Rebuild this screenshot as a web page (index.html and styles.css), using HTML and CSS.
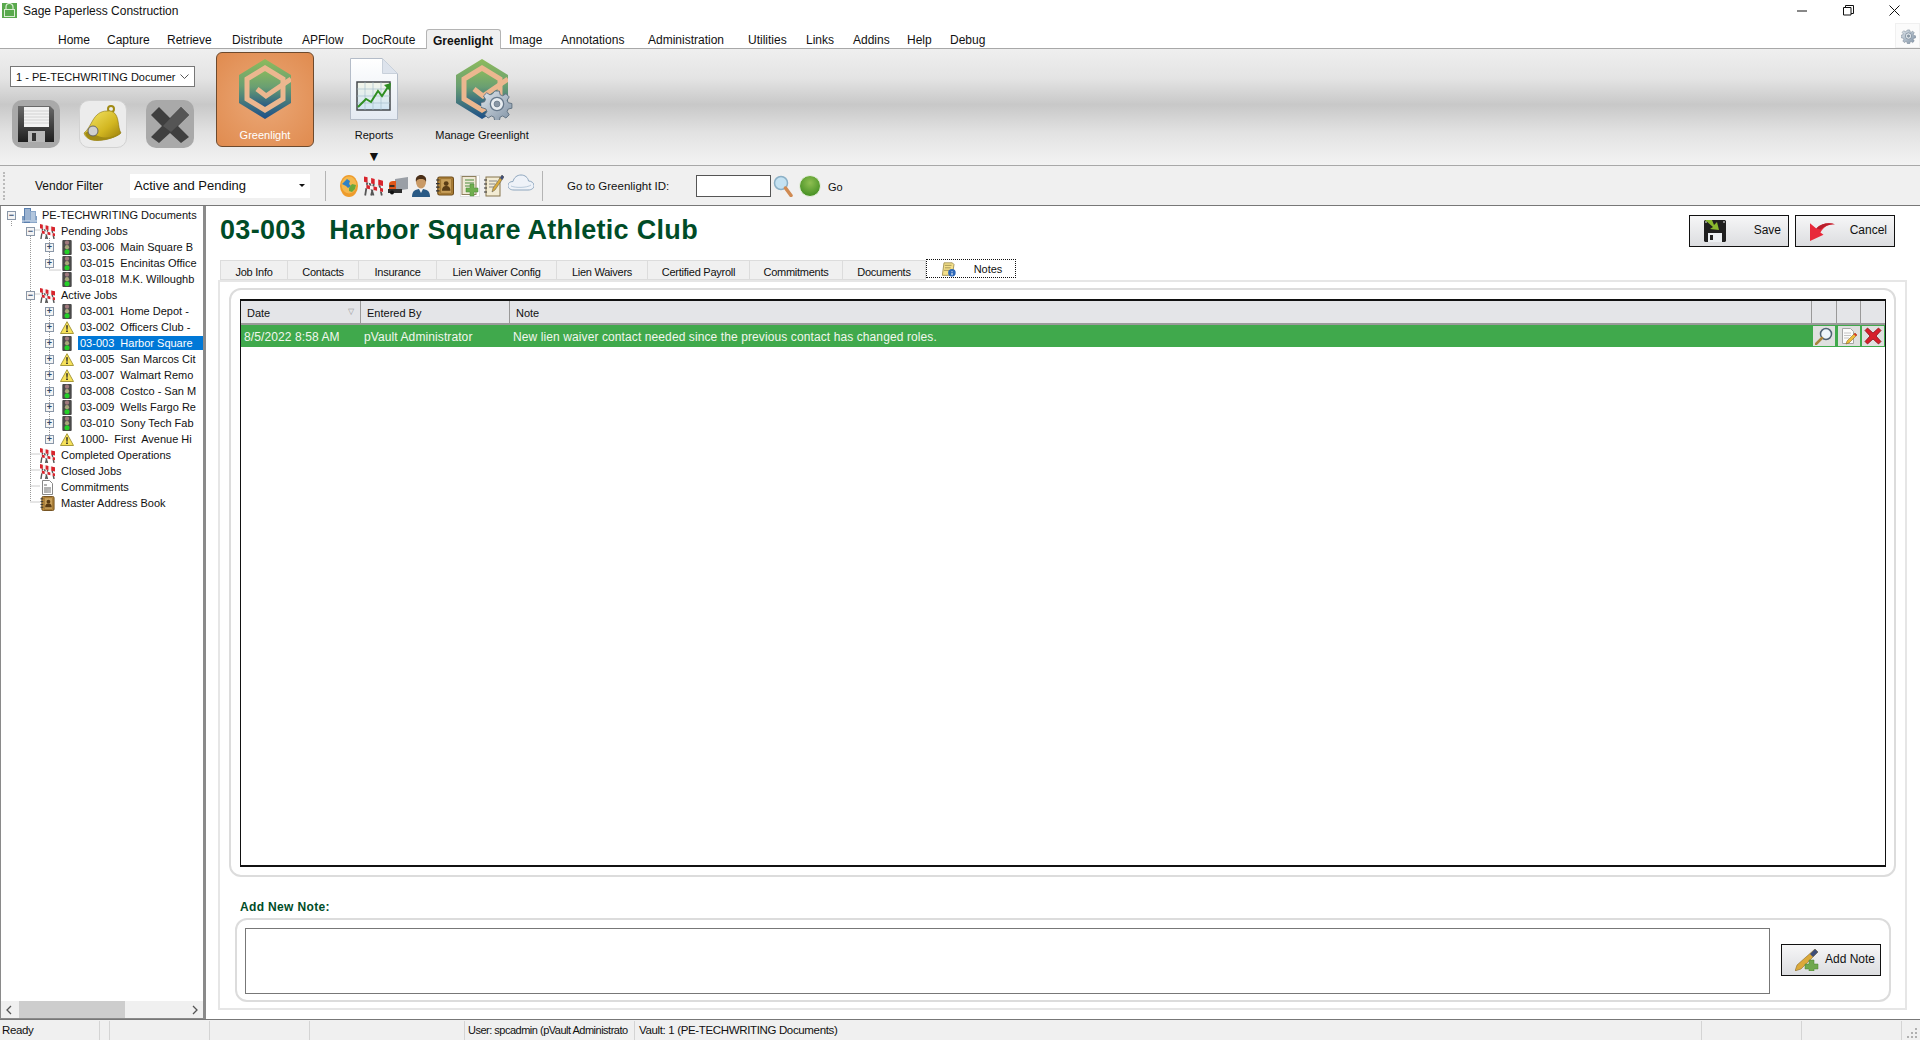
FILE: index.html
```html
<!DOCTYPE html>
<html>
<head>
    <title>Sage Paperless Construction</title>
    <link rel="stylesheet" href="styles.css">
</head>
<body>
    <svg class="defs" width="0" height="0">
        <defs>
            <linearGradient id="hexGrad" x1="0" y1="0" x2="0" y2="1">
                <stop offset="0" stop-color="#8dbb5c"/>
                <stop offset="0.45" stop-color="#6a9f72"/>
                <stop offset="1" stop-color="#1d4f88"/>
            </linearGradient>
            <linearGradient id="bellGrad" x1="0" y1="0" x2="1" y2="1">
                <stop offset="0" stop-color="#f7e96e"/>
                <stop offset="0.6" stop-color="#d2b620"/>
                <stop offset="1" stop-color="#94790c"/>
            </linearGradient>
            <linearGradient id="pageGrad" x1="0" y1="0" x2="0" y2="1">
                <stop offset="0" stop-color="#ffffff"/>
                <stop offset="1" stop-color="#e4eaf2"/>
            </linearGradient>
            <linearGradient id="chartGrad" x1="0" y1="0" x2="0" y2="1">
                <stop offset="0" stop-color="#f4f6ea"/>
                <stop offset="1" stop-color="#cfe4f4"/>
            </linearGradient>
            <linearGradient id="diskGrad" x1="0" y1="0" x2="0" y2="1">
                <stop offset="0" stop-color="#6a6a6a"/>
                <stop offset="1" stop-color="#1e1e1e"/>
            </linearGradient>
            <linearGradient id="gearGrad" x1="0" y1="0" x2="1" y2="1">
                <stop offset="0" stop-color="#dfe6ec"/>
                <stop offset="1" stop-color="#7f91a4"/>
            </linearGradient>
            <radialGradient id="ballGrad" cx="0.5" cy="0.35" r="0.7">
                <stop offset="0" stop-color="#8fbf52"/>
                <stop offset="1" stop-color="#3d8a1e"/>
            </radialGradient>
            <symbol id="logo" viewBox="0 0 52 60">
                <polygon points="26,0 52,16 52,44 26,60 0,44 0,16" fill="url(#hexGrad)"/>
                <polygon points="26,9 44,20 44,40 26,51 8,40 8,20" fill="url(#hexGrad)" stroke="#ecb78f" stroke-width="5"/>
                <path d="M18 30l9 7 25-17" fill="none" stroke="#ecb78f" stroke-width="5"/>
            </symbol>
            <symbol id="gear" viewBox="0 0 24 24">
                <path d="M10 1h4l.7 3.2 2.2.9 2.8-1.800 2.800 2.800-1.800 2.800.9 2.200 3.200.7v4l-3.200.7-.9 2.200 1.800 2.800-2.800 2.800-2.800-1.800-2.200.9-.7 3.200h-4l-.7-3.200-2.200-.9-2.800 1.800-2.800-2.800 1.800-2.800-.9-2.200L-2 15v-4l3.200-.7.9-2.200L.3 5.300l2.800-2.800 2.800 1.800 2.200-.9z" transform="translate(1.600 1.400) scale(.87)" fill="url(#gearGrad)" stroke="#5f7080" stroke-width=".8"/>
                <circle cx="12" cy="12" r="5" fill="#e8edf1" stroke="#66788a"/>
                <circle cx="12" cy="12" r="2.200" fill="#8a98a6" stroke="#5f7080" stroke-width=".5"/>
            </symbol>
            <symbol id="barricade" viewBox="0 0 16 16">
                <path d="M3 3l-2 13M12 3l3 13M4 3l4 13M9 3l-3 13" stroke="#555" stroke-width="1.500"/>
                <path d="M0 0l16 3.500v4.500L0 4.500z" fill="#f4f4f4"/>
                <path d="M0 0l3 .7v4.500L0 4.500zM6 1.300l3 .7v4.500L6 5.800zM12 2.600l4 .9v4.500l-4-.9z" fill="#d8242c"/>
                <path d="M0 6.500l16 3.500v3L0 9.500z" fill="#f4f4f4"/>
                <path d="M2 7l3 .7v3L2 10zM8 8.300l3 .7v3l-3-.7zM13.500 9.500l2.500.5v3l-2.500-.5z" fill="#d8242c"/>
            </symbol>
            <symbol id="signal" viewBox="0 0 10 16">
                <rect width="10" height="16" rx="1" fill="#4a4a4a"/>
                <circle cx="5" cy="2.800" r="2.300" fill="#a07a7e"/>
                <circle cx="5" cy="7.600" r="2.300" fill="#a8a67a"/>
                <circle cx="5" cy="12.600" r="2.700" fill="#25d028"/>
            </symbol>
            <symbol id="warn" viewBox="0 0 14 13">
                <path d="M7 .7L13.500 12.500H.5z" fill="#f7e25a" stroke="#a89a3c"/>
                <path d="M6.200 4.200h1.600l-.3 4.600h-1zM6.200 9.600h1.600v1.500H6.200z" fill="#222"/>
            </symbol>
            <symbol id="building" viewBox="0 0 15 15">
                <rect x="0" y="8" width="15" height="7" fill="#7f9cc0"/>
                <rect x="2" y="0" width="7" height="15" fill="#5a7fae"/>
                <rect x="8" y="3" width="6" height="12" fill="#8aa6c8"/>
                <path d="M3 2h5M3 4h5M3 6h5M3 8h5M3 10h5M3 12h5M9 5h4M9 7h4M9 9h4M9 11h4M0 13h15" stroke="#dbe6f2"/>
            </symbol>
            <symbol id="po" viewBox="0 0 15 15">
                <path d="M2.500.5h7l3 3v11h-10z" fill="#fff" stroke="#888"/>
                <path d="M4 5h3M4 8h7M4 10h7M4 12h7" stroke="#666"/>
                <rect x="7.500" y="9" width="3.500" height="4" fill="#bbb"/>
            </symbol>
            <symbol id="book" viewBox="0 0 15 16">
                <rect x="1.500" y=".5" width="13" height="15" rx="1.500" fill="#b88a3c" stroke="#6d4a18"/>
                <rect x="4" y="2" width="9" height="12" fill="#c9a05a" stroke="#8a6428" stroke-width=".5"/>
                <circle cx="8.500" cy="6" r="2" fill="#5a3c14"/>
                <path d="M5 12c0-3 1.500-4 3.500-4s3.500 1 3.500 4z" fill="#5a3c14"/>
                <path d="M0 3h3M0 6h3M0 9h3M0 12h3" stroke="#333"/>
            </symbol>
            <symbol id="globe" viewBox="0 0 18 22">
                <ellipse cx="9" cy="11" rx="9" ry="11" fill="#ee9c2c"/>
                <ellipse cx="9" cy="10" rx="7.500" ry="8.500" fill="#f4b84e"/>
                <path d="M2 9l5-5 3 2-1 3 2 2-3 2-2-2z" fill="#2f82c6"/>
                <path d="M9 13l3-4 4 1-1 4-3 3-3-1z" fill="#6aa83c"/>
            </symbol>
            <symbol id="truck" viewBox="0 0 20 18">
                <path d="M7 2l13-2v12L7 14z" fill="#9a9fa6"/>
                <path d="M1 7c0-2 2-3 4-3h3v10H1z" fill="#e0561a"/>
                <path d="M1.500 8h5v2h-5z" fill="#3a2a20"/>
                <rect x="0" y="12" width="14" height="4" fill="#2e2e2e"/>
                <circle cx="4" cy="15.500" r="2" fill="#111"/>
            </symbol>
            <symbol id="person" viewBox="0 0 18 22">
                <path d="M0 22c0-6 3-8 9-8s9 2 9 8z" fill="#2a5a85"/>
                <path d="M7 14l2 4 2-4z" fill="#f2f2f2"/>
                <ellipse cx="9" cy="7" rx="5" ry="6.500" fill="#c99a66"/>
                <path d="M4 7C3 2 6 0 9 0s6 2 5 7c-1-3-3-3-5-3s-4 0-5 3z" fill="#4a2f18"/>
            </symbol>
            <symbol id="noteplus" viewBox="0 0 20 22">
                <rect x=".5" y=".5" width="19" height="21" fill="#fff" stroke="#ddd"/>
                <rect x="2" y="1.500" width="14" height="18" fill="#efe9d6" stroke="#8d7f5c"/>
                <path d="M5 5h9M5 8h9M5 11h5" stroke="#4b8a3c"/>
                <path d="M10 9h4v4h4v4h-4v4h-4v-4H6v-4h4z" fill="#6fae4e" stroke="#4b8a3c" stroke-width=".5"/>
            </symbol>
            <symbol id="notepen" viewBox="0 0 20 22">
                <rect x="2" y="2" width="14" height="19" fill="#f3ecd4" stroke="#85744c"/>
                <path d="M0 5h3M0 9h3M0 13h3M0 17h3" stroke="#333"/>
                <path d="M5 6h8M5 9h6M5 12h5" stroke="#888"/>
                <path d="M18 0l2 2-9 13-3 2 1-4z" fill="#d8aa3c" stroke="#555" stroke-width=".5"/>
                <path d="M18 0l2 2-2 3-2-2z" fill="#3e4e78"/>
            </symbol>
            <symbol id="cloud" viewBox="0 0 26 17">
                <path d="M6 16C2 16 0 14 0 11.500S2 7.500 5 7.500C6 3.500 9 1 13 1s7 2.500 7.500 6c3 0 5.500 2 5.500 4.500S24 16 20 16z" fill="#eef2f8" stroke="#8ea6be"/>
                <path d="M3 12c4 2 16 2 20-1" fill="none" stroke="#b9cadb"/>
            </symbol>
            <symbol id="magnify" viewBox="0 0 20 22">
                <circle cx="8" cy="8" r="6.500" fill="#c4e2f2" stroke="#8bb0c6" stroke-width="1.500"/>
                <path d="M12.500 13l5.500 7.500" stroke="#d08a52" stroke-width="3.500" stroke-linecap="round"/>
            </symbol>
            <symbol id="lens" viewBox="0 0 18 18">
                <circle cx="11" cy="7" r="5.500" fill="#eef6fb" stroke="#4f6272" stroke-width="1.500"/>
                <path d="M7 11l-6 6" stroke="#a8843c" stroke-width="2.500" stroke-linecap="round"/>
            </symbol>
            <symbol id="editdoc" viewBox="0 0 18 18">
                <path d="M2.500 1.500h8l3 3v12h-11z" fill="#fbfbfb" stroke="#a5a5a5"/>
                <path d="M4 6h7M4 8.500h7M4 11h5" stroke="#c4c4c4"/>
                <path d="M15 6l2 2-8 8-3 1 1-3z" fill="#eebd3c" stroke="#7a5a18" stroke-width=".5"/>
                <path d="M15 6l2 2-1.200 1.200-2-2z" fill="#d9332e"/>
            </symbol>
            <symbol id="redx" viewBox="0 0 18 18">
                <path d="M3.500 1L9 6l5.500-5L17 3.500 12 9l5 5.500-2.500 2.500L9 12l-5.500 5L1 14.500 6 9 1 3.500z" fill="#d6202a" stroke="#8a1218" stroke-width=".8"/>
            </symbol>
            <symbol id="bigsave" viewBox="0 0 22 22">
                <path d="M1 0h20l1 1v20l-1 1H1l-1-1V1z" fill="#1f1f1f"/>
                <rect x="4" y="13" width="14" height="9" fill="#eceff2"/>
                <rect x="6" y="15" width="3" height="5" fill="#222"/>
                <rect x="1" y="1" width="2" height="2" fill="#888"/>
                <rect x="19" y="1" width="2" height="2" fill="#888"/>
                <path d="M1 0h7l2 5 3-3 2 8-9-1 3-2z" fill="#8ab92e"/>
            </symbol>
            <symbol id="back" viewBox="0 0 24 18">
                <path d="M0 18V1l6 5C11 1 18 0 24 2c-6 0-11 2-14 8l3 2z" fill="#e8293a"/>
                <path d="M6 6C11 1 18 0 24 2c-5-.200-10 1.500-14 5z" fill="#b81f2c"/>
            </symbol>
            <symbol id="penplus" viewBox="0 0 24 22">
                <path d="M20 0l3 3L6 20l-6 2 2-6z" fill="#dba93a" stroke="#7a5f1f" stroke-width=".5"/>
                <path d="M20 0l3 3-5 5-3-3z" fill="#3e4e78"/>
                <path d="M14 11h5v4h4v5h-4v2h-5v-2h-4v-5h4z" fill="#6fa84e" stroke="#4a8030" stroke-width=".5"/>
            </symbol>
            <symbol id="noteinfo" viewBox="0 0 20 18">
                <path d="M4 1h10l2 2-2 13H2z" fill="#f4e08a" stroke="#9a8a4c"/>
                <path d="M5 4h8M5 7h7M4 10h6" stroke="#96884c"/>
                <circle cx="13.500" cy="13" r="4.500" fill="#2c67b8"/>
                <path d="M13 11h1.200v1H13zM13 12.800h1.200V16H13z" fill="#fff"/>
            </symbol>
        </defs>
    </svg>

    <div class="titlebar">
        <svg class="app-icon" viewBox="0 0 15 15">
            <rect width="15" height="15" fill="#59a94d"/>
            <path d="M4 7V4a3.500 3.500 0 0 1 7 0v3" fill="none" stroke="#d9edd2" stroke-width="1.200"/>
            <rect x="2.500" y="6.500" width="10" height="7" fill="none" stroke="#d9edd2"/>
        </svg>
        <span class="app-title">Sage Paperless Construction</span>
        <div class="window-btns">
            <svg class="win-btn" viewBox="0 0 11 11"><path d="M0 6h10" stroke="#111"/></svg>
            <svg class="win-btn" viewBox="0 0 11 11"><path d="M.5 2.500h7.500v7.500H.5zM2.500 2.500V.5h8v8H8" fill="none" stroke="#111"/></svg>
            <svg class="win-btn" viewBox="0 0 11 11"><path d="M.5.5l10 10M10.500.5l-10 10" stroke="#111"/></svg>
        </div>
    </div>

    <div class="menubar">
        <span>Home</span>
        <span>Capture</span>
        <span>Retrieve</span>
        <span>Distribute</span>
        <span>APFlow</span>
        <span>DocRoute</span>
        <span class="active">Greenlight</span>
        <span>Image</span>
        <span>Annotations</span>
        <span>Administration</span>
        <span>Utilities</span>
        <span>Links</span>
        <span>Addins</span>
        <span>Help</span>
        <span>Debug</span>
        <div class="settings"><svg class="settings-gear"><use href="#gear"/></svg></div>
    </div>

    <div class="ribbon">
        <div class="ribbon-left">
            <div class="vault-select">
                <span class="vault-text">1 - PE-TECHWRITING Documer</span>
                <svg class="chevron" viewBox="0 0 9 5"><path d="M.5.500l4 4 4-4" fill="none" stroke="#555"/></svg>
            </div>
            <div class="quick-btns">
                <div class="quick gray">
                    <svg class="quick-icon" viewBox="0 0 40 40">
                        <path d="M2 2h32l4 4v32H2z" fill="url(#diskGrad)"/>
                        <rect x="8" y="3" width="25" height="20" fill="#f2f2f2"/>
                        <path d="M8 7h25M8 10h25M8 13h25M8 16h25M8 19h25" stroke="#d2d2d2"/>
                        <rect x="12" y="27" width="17" height="11" fill="#b8b8b8"/>
                        <rect x="16" y="29" width="4" height="8" fill="#333"/>
                    </svg>
                </div>
                <div class="quick light">
                    <svg class="quick-icon" viewBox="0 0 40 40">
                        <circle cx="28" cy="5" r="3" fill="none" stroke="#a08a14" stroke-width="2"/>
                        <path d="M24 7c7-1 10 4 11 10 1 5 1 9 3 12-6 5-20 9-29 7-3-.5-7-3-8-7 4-3 6-8 9-13 3-5 7-9 14-9z" fill="url(#bellGrad)" stroke="#8a7410" stroke-width=".6"/>
                        <path d="M2 29c5-3 8-1 11 2 6 4 16 3 25-2-2 4-18 9-29 7-3-.5-6-3-7-7z" fill="#a08a14"/>
                        <circle cx="10" cy="27" r="5" fill="#cfcfcf" stroke="#666"/>
                    </svg>
                </div>
                <div class="quick gray">
                    <svg class="quick-icon" viewBox="0 0 40 40">
                        <path d="M9 3l11 11L31 3l8 8-11 11 11 11-8 6-11-10L9 39l-8-6 11-11L1 11z" fill="#3f3f3f"/>
                        <path d="M31 3l8 8L21 28l-8-6z" fill="#555"/>
                    </svg>
                </div>
            </div>
        </div>
        <div class="big-btn selected">
            <svg class="big-logo"><use href="#logo"/></svg>
            <span class="big-label">Greenlight</span>
        </div>
        <div class="big-btn reports">
            <svg class="report-icon" viewBox="0 0 48 62">
                <path d="M.5.500h32l15 15v46H.5z" fill="url(#pageGrad)" stroke="#b4bcc8"/>
                <path d="M32.500.500v15h15z" fill="#dde3ec" stroke="#c8d0da"/>
                <rect x="7" y="24" width="33" height="28" fill="url(#chartGrad)" stroke="#44484c" stroke-width="1.500"/>
                <path d="M7 31h33M7 38h33M7 45h33M15 24v28M23 24v28M31 24v28" stroke="#9db8c8" stroke-width=".6"/>
                <path d="M8 49l8-8 5 3 7-11 4 5 6-9" fill="none" stroke="#2f8f22" stroke-width="2"/>
                <path d="M34 27l7-2-1 8z" fill="#2f8f22"/>
            </svg>
            <span class="big-label">Reports</span>
            <span class="drop-arrow">▼</span>
        </div>
        <div class="big-btn manage">
            <div class="manage-icon">
                <svg class="manage-logo"><use href="#logo"/></svg>
                <svg class="manage-gear"><use href="#gear"/></svg>
            </div>
            <span class="big-label">Manage Greenlight</span>
        </div>
    </div>

    <div class="toolbar">
        <span class="grip"></span>
        <span class="filter-label">Vendor Filter</span>
        <div class="filter-select">
            <span>Active and Pending</span>
            <span class="filter-arrow"></span>
        </div>
        <span class="sep sep-a"></span>
        <div class="tool-icons">
            <svg class="t-globe"><use href="#globe"/></svg>
            <svg class="t-barr"><use href="#barricade"/></svg>
            <svg class="t-truck"><use href="#truck"/></svg>
            <svg class="t-person"><use href="#person"/></svg>
            <svg class="t-book"><use href="#book"/></svg>
            <svg class="t-note"><use href="#noteplus"/></svg>
            <svg class="t-note"><use href="#notepen"/></svg>
            <svg class="t-cloud"><use href="#cloud"/></svg>
        </div>
        <span class="sep sep-b"></span>
        <span class="goto-label">Go to Greenlight ID:</span>
        <div class="goto-input"></div>
        <svg class="goto-magnify"><use href="#magnify"/></svg>
        <svg class="goto-ball" viewBox="0 0 22 22"><circle cx="11" cy="11" r="10.500" fill="url(#ballGrad)" stroke="#e8f0e0"/></svg>
        <span class="goto-go">Go</span>
    </div>

    <div class="main">
        <div class="tree-panel">
            <div class="tree">
                <svg class="tree-lines" width="200" height="300">
                    <path d="M11.500 10v12M30.500 25v272M30.500 25h9M30.500 89h9M30.500 249h9M30.500 265h9M30.500 281h9M30.500 297h9M49.500 33v32M49.500 105v128M49.500 65h11" fill="none" stroke="#999" stroke-dasharray="1 1"/>
                </svg>
                <div class="row l0"><span class="exp">−</span><svg class="i-root"><use href="#building"/></svg><span class="lbl">PE-TECHWRITING Documents</span></div>
                <div class="row l1"><span class="exp">−</span><svg class="i-barr"><use href="#barricade"/></svg><span class="lbl">Pending Jobs</span></div>
                <div class="row l2"><span class="exp">+</span><svg class="i-sig"><use href="#signal"/></svg><span class="lbl">03-006  Main Square B</span></div>
                <div class="row l2"><span class="exp">+</span><svg class="i-sig"><use href="#signal"/></svg><span class="lbl">03-015  Encinitas Office</span></div>
                <div class="row l2"><span class="exp none"></span><svg class="i-sig"><use href="#signal"/></svg><span class="lbl">03-018  M.K. Willoughb</span></div>
                <div class="row l1"><span class="exp">−</span><svg class="i-barr"><use href="#barricade"/></svg><span class="lbl">Active Jobs</span></div>
                <div class="row l2"><span class="exp">+</span><svg class="i-sig"><use href="#signal"/></svg><span class="lbl">03-001  Home Depot -</span></div>
                <div class="row l2"><span class="exp">+</span><svg class="i-warn"><use href="#warn"/></svg><span class="lbl">03-002  Officers Club -</span></div>
                <div class="row l2 sel"><span class="exp">+</span><svg class="i-sig"><use href="#signal"/></svg><span class="lbl">03-003  Harbor Square</span></div>
                <div class="row l2"><span class="exp">+</span><svg class="i-warn"><use href="#warn"/></svg><span class="lbl">03-005  San Marcos Cit</span></div>
                <div class="row l2"><span class="exp">+</span><svg class="i-warn"><use href="#warn"/></svg><span class="lbl">03-007  Walmart Remo</span></div>
                <div class="row l2"><span class="exp">+</span><svg class="i-sig"><use href="#signal"/></svg><span class="lbl">03-008  Costco - San M</span></div>
                <div class="row l2"><span class="exp">+</span><svg class="i-sig"><use href="#signal"/></svg><span class="lbl">03-009  Wells Fargo Re</span></div>
                <div class="row l2"><span class="exp">+</span><svg class="i-sig"><use href="#signal"/></svg><span class="lbl">03-010  Sony Tech Fab</span></div>
                <div class="row l2"><span class="exp">+</span><svg class="i-warn"><use href="#warn"/></svg><span class="lbl">1000-  First  Avenue Hi</span></div>
                <div class="row l1"><span class="exp none"></span><svg class="i-barr"><use href="#barricade"/></svg><span class="lbl">Completed Operations</span></div>
                <div class="row l1"><span class="exp none"></span><svg class="i-barr"><use href="#barricade"/></svg><span class="lbl">Closed Jobs</span></div>
                <div class="row l1"><span class="exp none"></span><svg class="i-barr"><use href="#po"/></svg><span class="lbl">Commitments</span></div>
                <div class="row l1"><span class="exp none"></span><svg class="i-barr"><use href="#book"/></svg><span class="lbl">Master Address Book</span></div>
            </div>
            <div class="hscroll">
                <svg class="scroll-arrow" viewBox="0 0 6 10"><path d="M5 1L1 5l4 4" fill="none" stroke="#555" stroke-width="1.300"/></svg>
                <div class="scroll-track"><div class="scroll-thumb"></div></div>
                <svg class="scroll-arrow" viewBox="0 0 6 10"><path d="M1 1l4 4-4 4" fill="none" stroke="#555" stroke-width="1.300"/></svg>
            </div>
        </div>

        <div class="content">
            <div class="header">
                <h1>03-003   Harbor Square Athletic Club</h1>
                <div class="actions">
                    <div class="act-btn">
                        <svg class="act-save"><use href="#bigsave"/></svg>
                        <span>Save</span>
                    </div>
                    <div class="act-btn">
                        <svg class="act-back"><use href="#back"/></svg>
                        <span>Cancel</span>
                    </div>
                </div>
            </div>

            <div class="tabs">
                <span class="tab w68">Job Info</span>
                <span class="tab w71">Contacts</span>
                <span class="tab w78">Insurance</span>
                <span class="tab w120">Lien Waiver Config</span>
                <span class="tab w91">Lien Waivers</span>
                <span class="tab w102">Certified Payroll</span>
                <span class="tab w93">Commitments</span>
                <span class="tab w83">Documents</span>
                <span class="tab notes-tab">
                    <svg class="tab-icon"><use href="#noteinfo"/></svg>
                    <span>Notes</span>
                </span>
            </div>

            <div class="tab-panel">
                <div class="group notes-group">
                    <div class="grid">
                        <div class="grid-row grid-head">
                            <span>Date<i class="sort">▽</i></span>
                            <span>Entered By</span>
                            <span>Note</span>
                            <span></span>
                            <span></span>
                            <span></span>
                        </div>
                        <div class="grid-row grid-item">
                            <span>8/5/2022 8:58 AM</span>
                            <span>pVault Administrator</span>
                            <span>New lien waiver contact needed since the previous contact has changed roles.</span>
                            <span class="cell-btn"><svg><use href="#lens"/></svg></span>
                            <span class="cell-btn"><svg><use href="#editdoc"/></svg></span>
                            <span class="cell-btn"><svg><use href="#redx"/></svg></span>
                        </div>
                    </div>
                </div>

                <div class="add-label">Add New Note:</div>
                <div class="group add-group">
                    <div class="note-box"></div>
                    <div class="act-btn add-btn">
                        <svg class="add-icon"><use href="#penplus"/></svg>
                        <span>Add Note</span>
                    </div>
                </div>
            </div>
        </div>
    </div>

    <div class="statusbar">
        <span class="cell c-ready">Ready</span>
        <span class="cell c10"></span>
        <span class="cell c100"></span>
        <span class="cell c100"></span>
        <span class="cell c155"></span>
        <span class="cell c-user">User: spcadmin (pVault Administrato</span>
        <span class="cell c-vault">Vault: 1 (PE-TECHWRITING Documents)</span>
        <span class="cell c100"></span>
        <span class="cell c100"></span>
        <span class="cell c-grip">
            <svg class="grip-dots" viewBox="0 0 11 11"><path d="M8 0h2v2H8zM4 4h2v2H4zM8 4h2v2H8zM0 8h2v2H0zM4 8h2v2H4zM8 8h2v2H8z" fill="#b0b0b0"/></svg>
        </span>
    </div>
</body>
</html>
```

FILE: styles.css
```css
:root {
    --chrome: #f0f0f0;
    --heading: #004c27;
    --line: #dcdcdc;
    --green-row: #40a94c;
}

* {
    box-sizing: border-box;
}

html, body {
    height: 100%;
}

body {
    margin: 0;
    display: flex;
    flex-direction: column;
    height: 1040px;
    overflow: hidden;
    background: white;
    color: #111;
    font-family: 'Liberation Sans', Arial, sans-serif;
    font-size: 12px;
}

.defs {
    position: absolute;
}

svg {
    display: block;
    flex: none;
}

/* title bar */
.titlebar {
    display: flex;
    align-items: center;
    height: 24px;
    padding-left: 2px;
    background: white;
}

.app-icon {
    width: 15px;
    height: 15px;
    margin-top: -4px;
}

.app-title {
    margin: -2px 0 0 6px;
}

.window-btns {
    display: flex;
    gap: 35px;
    margin-left: auto;
    margin-right: 20px;
    margin-top: -4px;
}

.win-btn {
    width: 11px;
    height: 11px;
}

/* menu */
.menubar {
    display: grid;
    grid-template-columns: 49px 60px 65px 70px 60px 64px 83px 52px 87px 100px 58px 47px 54px 43px 1fr;
    align-items: center;
    position: relative;
    height: 25px;
    padding-left: 58px;
    border-bottom: 1px solid #a8a8a8;
}

.menubar span {
    padding-top: 7px;
}

.menubar .active {
    width: 75px;
    height: 20px;
    margin-top: 5px;
    margin-bottom: -1px;
    padding: 4px 0 0 6px;
    background: var(--chrome);
    border: 1px solid #b4b4b4;
    border-bottom: none;
    border-radius: 3px 3px 0 0;
    font-weight: bold;
    z-index: 1;
}

.settings {
    position: absolute;
    right: 0;
    top: -1px;
    width: 25px;
    height: 25px;
    padding: 4px 5px;
    background: #fbfbfb;
    border: 1px solid #f0f0f0;
}

.settings-gear {
    width: 15px;
    height: 16px;
}

/* ribbon */
.ribbon {
    display: flex;
    height: 117px;
    padding-top: 3px;
    background: linear-gradient(#efefef 0%, #e4e4e4 25%, #c8c8c8 48%, #e2e2e2 72%, #f3f3f3 100%);
    border-bottom: 1px solid #a8a8a8;
}

.ribbon-left {
    width: 216px;
    padding: 14px 0 0 10px;
}

.vault-select {
    display: flex;
    align-items: center;
    justify-content: space-between;
    width: 185px;
    height: 21px;
    padding: 0 5px;
    background: white;
    border: 1px solid #777;
    font-size: 11px;
}

.vault-text {
    white-space: nowrap;
}

.chevron {
    width: 9px;
    height: 5px;
}

.quick-btns {
    display: flex;
    gap: 19px;
    margin-top: 13px;
    padding-left: 2px;
}

.quick {
    width: 48px;
    height: 48px;
    padding: 4px;
    border-radius: 10px;
}

.quick.gray {
    background: #a9a9a9;
}

.quick.light {
    background: #ececec;
    border: 1px solid #d2d2d2;
    padding: 3px;
}

.quick-icon {
    width: 40px;
    height: 40px;
}

.big-btn {
    display: flex;
    flex-direction: column;
    align-items: center;
    position: relative;
    font-size: 11px;
}

.big-label {
    position: absolute;
    bottom: 6px;
    white-space: nowrap;
}

.big-btn.selected {
    width: 98px;
    height: 95px;
    padding-top: 6px;
    background: radial-gradient(#eba877, #e08b4f);
    border: 1px solid #6d4a2e;
    border-radius: 6px;
    color: white;
}

.big-btn.selected .big-label {
    bottom: 5px;
}

.big-logo {
    width: 52px;
    height: 60px;
}

.reports {
    width: 62px;
    height: 95px;
    margin-left: 29px;
    padding-top: 6px;
}

.report-icon {
    width: 48px;
    height: 62px;
}

.drop-arrow {
    position: absolute;
    top: 96px;
    font-size: 14px;
    color: #111;
}

.manage {
    width: 90px;
    height: 95px;
    margin-left: 32px;
    padding-top: 7px;
}

.manage-icon {
    position: relative;
    width: 60px;
    height: 60px;
    padding-left: 4px;
}

.manage-logo {
    width: 52px;
    height: 60px;
}

.manage-gear {
    position: absolute;
    right: -1px;
    bottom: -1px;
    width: 32px;
    height: 32px;
}

/* toolbar */
.toolbar {
    display: flex;
    align-items: center;
    height: 40px;
    background: var(--chrome);
    border-bottom: 1px solid #777;
}

.grip {
    width: 2px;
    height: 28px;
    margin-left: 3px;
    border-left: 2px dotted #bbb;
}

.filter-label {
    width: 65px;
    margin-left: 30px;
    white-space: nowrap;
}

.filter-select {
    display: flex;
    align-items: center;
    justify-content: space-between;
    width: 180px;
    height: 24px;
    margin-left: 30px;
    padding: 0 5px 0 4px;
    background: white;
    font-size: 13px;
}

.filter-arrow {
    width: 0;
    height: 0;
    border: 3px solid transparent;
    border-top: 3px solid #111;
    margin-top: 3px;
}

.sep {
    width: 1px;
    height: 30px;
    background: #b4b4b4;
}

.sep-a {
    margin-left: 15px;
}

.sep-b {
    margin-left: 11px;
}

.tool-icons {
    display: grid;
    grid-auto-flow: column;
    grid-auto-columns: 24px;
    align-items: center;
    width: 205px;
    padding-left: 14px;
}

.t-globe {
    width: 18px;
    height: 22px;
}

.t-barr {
    width: 19px;
    height: 20px;
}

.t-truck {
    width: 20px;
    height: 18px;
}

.t-person {
    width: 18px;
    height: 22px;
}

.t-book {
    width: 18px;
    height: 20px;
}

.t-note {
    width: 20px;
    height: 22px;
}

.t-cloud {
    width: 26px;
    height: 17px;
    margin-top: -6px;
}

.goto-label {
    width: 105px;
    margin-left: 24px;
    font-size: 11.5px;
    white-space: nowrap;
}

.goto-input {
    width: 75px;
    height: 22px;
    margin-left: 24px;
    background: white;
    border: 1px solid #555;
}

.goto-magnify {
    width: 20px;
    height: 22px;
    margin-left: 2px;
}

.goto-ball {
    width: 22px;
    height: 22px;
    margin-left: 6px;
}

.goto-go {
    margin-left: 7px;
    font-size: 11px;
    padding-top: 2px;
}

/* main area */
.main {
    display: flex;
    flex: 1;
    min-height: 0;
}

.tree-panel {
    display: flex;
    flex-direction: column;
    width: 206px;
    border-left: 1px solid #8a8a8a;
    border-right: 3px solid #8a8a8a;
    border-bottom: 1px solid #8a8a8a;
}

.tree {
    position: relative;
    flex: 1;
    margin-left: -1px;
    padding-top: 1px;
    font-size: 11px;
}

.tree-lines {
    position: absolute;
    left: 0;
    top: -1px;
}

.row {
    display: flex;
    align-items: center;
    position: relative;
    height: 16px;
    white-space: pre;
}

.l0 {
    padding-left: 7px;
}

.l1 {
    padding-left: 26px;
}

.l2 {
    padding-left: 45px;
}

.exp {
    width: 9px;
    height: 9px;
    background: #f4f4f4;
    border: 1px solid #8a97a8;
    color: #33496a;
    font-size: 9px;
    line-height: 7px;
    text-align: center;
    font-weight: bold;
}

.exp.none {
    visibility: hidden;
}

.i-root {
    width: 15px;
    height: 15px;
    margin-left: 6px;
}

.i-root + .lbl {
    margin-left: 5px;
}

.i-barr {
    width: 15px;
    height: 15px;
    margin-left: 5px;
}

.i-barr + .lbl {
    margin-left: 6px;
}

.i-sig {
    width: 10px;
    height: 15px;
    margin-left: 8px;
}

.i-sig + .lbl {
    margin-left: 8px;
}

.i-warn {
    width: 14px;
    height: 13px;
    margin-left: 6px;
}

.i-warn + .lbl {
    margin-left: 6px;
}

.sel .i-sig + .lbl {
    flex: 1;
    margin-left: 6px;
    padding: 1px 0 1px 2px;
    background: #0078d7;
    color: white;
}

.hscroll {
    display: flex;
    align-items: center;
    height: 17px;
    background: #f0f0f0;
}

.scroll-arrow {
    width: 6px;
    height: 10px;
    margin: 0 5px;
}

.scroll-track {
    flex: 1;
    height: 100%;
}

.scroll-thumb {
    width: 106px;
    height: 100%;
    margin-left: 2px;
    background: #cdcdcd;
}

/* right side */
.content {
    display: flex;
    flex-direction: column;
    flex: 1;
    min-width: 0;
}

.header {
    display: flex;
    justify-content: space-between;
    height: 54px;
    padding: 9px 25px 0 14px;
}

h1 {
    margin: 0;
    color: var(--heading);
    font-size: 27px;
    line-height: 30px;
    letter-spacing: 0.3px;
    white-space: pre;
}

.actions {
    display: flex;
    gap: 6px;
}

.act-btn {
    display: flex;
    align-items: center;
    justify-content: space-between;
    width: 100px;
    height: 32px;
    padding: 0 7px 0 14px;
    background: linear-gradient(#f6f6f7, #dcdde0);
    border: 1px solid #111;
}

.act-btn span {
    padding-bottom: 2px;
}

.act-save {
    width: 22px;
    height: 22px;
}

.act-back {
    width: 25px;
    height: 19px;
}

.tabs {
    display: flex;
    height: 20px;
    margin-left: 14px;
}

.tab {
    display: flex;
    align-items: center;
    justify-content: center;
    height: 20px;
    padding-top: 3px;
    background: var(--chrome);
    border: 1px solid var(--line);
    border-left: none;
    font-size: 11px;
    letter-spacing: -0.25px;
}

.tab:first-child {
    border-left: 1px solid var(--line);
}

.w68 { width: 68px; }
.w71 { width: 71px; }
.w78 { width: 78px; }
.w120 { width: 120px; }
.w91 { width: 91px; }
.w102 { width: 102px; }
.w93 { width: 93px; }
.w83 { width: 83px; }

.notes-tab {
    gap: 16px;
    width: 90px;
    height: 19px;
    margin-top: -1px;
    padding: 1px 0 0;
    background: white;
    border: 1px dotted #111;
    letter-spacing: 0;
    font-size: 11px;
}

.tab-icon {
    width: 18px;
    height: 15px;
}

.tab-panel {
    display: flex;
    flex-direction: column;
    height: 730px;
    margin: 0 13px 0 12px;
    padding-top: 6px;
    border: 2px solid #e6e6e6;
}

.group {
    background: white;
    border: 2px solid var(--line);
    border-radius: 12px;
}

.notes-group {
    display: flex;
    height: 589px;
    margin: 0 9px;
    padding: 9px 8px 8px 9px;
}

.grid {
    flex: 1;
    display: flex;
    flex-direction: column;
    border: 2px solid #111;
    border-right-width: 1px;
    border-left-width: 1px;
}

.grid-row {
    display: grid;
    grid-template-columns: 120px 149px 1fr 25px 24px 24px;
    align-items: center;
}

.grid-head {
    height: 24px;
    background: #e4e5e8;
    border-bottom: 2px solid #9a9a9a;
}

.grid-head span {
    position: relative;
    height: 100%;
    padding: 5px 0 0 6px;
    border-right: 1px solid #999;
    line-height: 15px;
    font-size: 11px;
}

.grid-head span:last-child {
    border-right: none;
}

.sort {
    position: absolute;
    right: 6px;
    top: 3px;
    color: #999;
    font-size: 8px;
    font-style: normal;
}

.grid-item {
    height: 22px;
    background: var(--green-row);
    color: #f2f7ee;
}

.grid-item span {
    padding: 2px 0 0 3px;
    letter-spacing: 0.1px;
    white-space: nowrap;
}

.grid-item .cell-btn {
    display: flex;
    align-items: center;
    justify-content: center;
    width: 22px;
    height: 20px;
    margin-left: 1px;
    padding: 0;
    background: #dfe0df;
}

.cell-btn svg {
    width: 18px;
    height: 18px;
}

.add-label {
    height: 16px;
    margin: 22px 0 3px 20px;
    color: var(--heading);
    font-weight: bold;
    line-height: 16px;
    letter-spacing: 0.35px;
}

.add-group {
    display: flex;
    align-items: flex-start;
    height: 84px;
    margin: 0 14px 0 15px;
    padding: 8px 0 0 8px;
}

.note-box {
    width: 1525px;
    height: 66px;
    border: 1px solid #777;
}

.add-btn {
    margin: 16px 0 0 11px;
    padding: 0 5px 0 13px;
}

.add-icon {
    width: 24px;
    height: 22px;
}

/* status bar */
.statusbar {
    display: flex;
    align-items: center;
    height: 21px;
    background: var(--chrome);
    border-top: 1px solid #777;
    font-size: 11.5px;
    letter-spacing: -0.35px;
}

.cell {
    height: 19px;
    padding: 3px 0 0 4px;
    border-right: 1px solid #d4d4d4;
    white-space: nowrap;
    overflow: hidden;
}

.c-ready {
    width: 100px;
    padding-left: 2px;
}

.c10 { width: 10px; }
.c100 { width: 100px; }
.c155 { width: 155px; }

.c-user {
    width: 170px;
    padding-left: 3px;
    font-size: 11px;
    letter-spacing: -0.5px;
}

.c-vault {
    width: 1067px;
}

.c-grip {
    width: 18px;
    padding: 7px 0 0 5px;
    border: none;
}

.grip-dots {
    width: 11px;
    height: 11px;
}
```
